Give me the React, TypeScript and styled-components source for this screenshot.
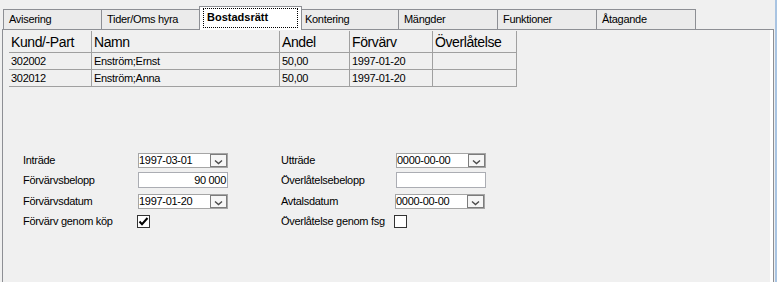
import React from "react";
import styled, { createGlobalStyle, css } from "styled-components";

const Global = createGlobalStyle`
  html, body { margin: 0; padding: 0; background: #f0f0f0; }
  body {
    font-family: "Liberation Sans", Arial, sans-serif;
    font-size: 11px;
    color: #000;
  }
`;

const Window = styled.div`
  box-sizing: border-box;
  width: 777px;
  height: 282px;
  overflow: hidden;
  background: #f0f0f0;
  padding-top: 5px;
  border-right: 2px solid #a9c4e2;
  display: flex;
  flex-direction: column;
`;

const TabStrip = styled.div`
  display: flex;
  align-items: flex-end;
  height: 24px;
  padding-left: 3px;
`;

const Tab = styled.div<{ $active?: boolean }>`
  box-sizing: border-box;
  position: relative;
  display: flex;
  align-items: center;
  border: 1px solid #8d8f94;
  border-bottom: none;
  white-space: nowrap;
  ${(p) =>
    p.$active
      ? css`
          width: 103px;
          height: 24px;
          top: 1px;
          z-index: 1;
          margin: 0 -2px 0 -2px;
          background: #fff;
          padding: 1px 3px 2px 3px;
        `
      : css`
          width: 100px;
          height: 20px;
          margin-left: -1px;
          background: #ebebeb;
          padding: 0 0 1px 5px;
          letter-spacing: -0.3px;
          &:first-child {
            margin-left: 0;
            width: 99px;
          }
        `}
`;

const FocusRing = styled.span`
  box-sizing: border-box;
  flex: 1;
  height: 100%;
  border: 1px dotted #000;
  display: flex;
  align-items: center;
  padding: 0 0 2px 3px;
  font-weight: bold;
`;

const Panel = styled.div`
  box-sizing: border-box;
  margin-left: 2px;
  width: 772px;
  flex: 1;
  border: 1px solid #8d8f94;
  border-bottom: none;
  box-shadow: inset -3px 0 0 #fff;
  padding: 1px 0 0 6px;
`;

const Grid = styled.div`
  display: grid;
  grid-template-columns: 83px 188px 70px 83px 84px;
  width: 508px;
`;

const HeadCell = styled.div`
  box-sizing: border-box;
  height: 22px;
  border-right: 1px solid #a0a0a0;
  border-bottom: 1px solid #a0a0a0;
  font-size: 14px;
  letter-spacing: -0.4px;
  line-height: 16px;
  padding: 3px 0 0 2px;
  white-space: nowrap;
`;

const Cell = styled.div`
  box-sizing: border-box;
  height: 17px;
  border-right: 1px solid #a0a0a0;
  border-bottom: 1px solid #a0a0a0;
  line-height: 13px;
  letter-spacing: -0.3px;
  padding: 2px 0 0 2px;
  white-space: nowrap;
`;

const Form = styled.div`
  display: flex;
  flex-direction: column;
  padding-left: 14px;
  margin-top: 66px;
`;

const FormRow = styled.div<{ $h: number; $gap: number }>`
  display: grid;
  grid-template-columns: 115px 90px 53px 115px 90px;
  align-items: center;
  height: ${(p) => p.$h}px;
  margin-top: ${(p) => p.$gap}px;
`;

const Label = styled.span`
  line-height: 13px;
  letter-spacing: -0.3px;
  white-space: nowrap;
`;

const Spacer = styled.span``;

const Combo = styled.div<{ $shift?: number }>`
  box-sizing: border-box;
  width: 90px;
  height: 15px;
  border: 1px solid #a5a5a5;
  background: #fff;
  display: flex;
  align-items: center;
  justify-content: space-between;
  margin-left: ${(p) => p.$shift ?? 0}px;
`;

const ComboText = styled.span`
  line-height: 13px;
  letter-spacing: -0.3px;
  padding-left: 0;
`;

const DropBtn = styled.span`
  box-sizing: border-box;
  width: 17px;
  height: 13px;
  border: 1px solid #7c7c7c;
  background: #f6f6f6;
  display: flex;
  align-items: flex-end;
  justify-content: center;
`;

const TextBox = styled.div`
  box-sizing: border-box;
  width: 90px;
  height: 16px;
  border: 1px solid #abadb3;
  background: #fff;
  text-align: right;
  line-height: 14px;
  letter-spacing: -0.3px;
  padding-right: 1px;
`;

const CheckBox = styled.span<{ $shift?: number }>`
  box-sizing: border-box;
  width: 13px;
  height: 13px;
  border: 1px solid #333;
  background: #fff;
  display: flex;
  align-items: center;
  justify-content: center;
  margin-left: ${(p) => p.$shift ?? 0}px;
`;

const Chevron = () => (
  <svg width="15" height="11" viewBox="0 0 15 11">
    <path d="M4 5.5 L7.5 8.5 L11 5.5" fill="none" stroke="#4a4a4a" strokeWidth="1.4" />
  </svg>
);

const Check = () => (
  <svg width="11" height="11" viewBox="0 0 11 11">
    <path d="M1.5 5.5 L4 8.2 L9.5 2" fill="none" stroke="#000" strokeWidth="2" />
  </svg>
);

const DateCombo: React.FC<{ value: string; shift?: number }> = ({ value, shift }) => (
  <Combo $shift={shift}>
    <ComboText>{value}</ComboText>
    <DropBtn>
      <Chevron />
    </DropBtn>
  </Combo>
);

const tabs = [
  "Avisering",
  "Tider/Oms hyra",
  "Bostadsrätt",
  "Kontering",
  "Mängder",
  "Funktioner",
  "Åtagande",
];

const headers = ["Kund/-Part", "Namn", "Andel", "Förvärv", "Överlåtelse"];
const rows = [
  ["302002", "Enström;Ernst", "50,00", "1997-01-20", ""],
  ["302012", "Enström;Anna", "50,00", "1997-01-20", ""],
];

export default function App() {
  return (
    <>
      <Global />
      <Window>
        <TabStrip>
          {tabs.map((t) =>
            t === "Bostadsrätt" ? (
              <Tab key={t} $active>
                <FocusRing>{t}</FocusRing>
              </Tab>
            ) : (
              <Tab key={t}>{t}</Tab>
            )
          )}
        </TabStrip>
        <Panel>
          <Grid>
            {headers.map((h) => (
              <HeadCell key={h}>{h}</HeadCell>
            ))}
            {rows.map((r, i) =>
              r.map((c, j) => <Cell key={`${i}-${j}`}>{c}</Cell>)
            )}
          </Grid>
          <Form>
            <FormRow $h={15} $gap={0}>
              <Label>Inträde</Label>
              <DateCombo value="1997-03-01" />
              <Spacer />
              <Label>Utträde</Label>
              <DateCombo value="0000-00-00" />
            </FormRow>
            <FormRow $h={16} $gap={4}>
              <Label>Förvärvsbelopp</Label>
              <TextBox>90 000</TextBox>
              <Spacer />
              <Label>Överlåtelsebelopp</Label>
              <TextBox />
            </FormRow>
            <FormRow $h={16} $gap={5}>
              <Label>Förvärvsdatum</Label>
              <DateCombo value="1997-01-20" />
              <Spacer />
              <Label>Avtalsdatum</Label>
              <DateCombo value="0000-00-00" shift={-1} />
            </FormRow>
            <FormRow $h={13} $gap={6}>
              <Label>Förvärv genom köp</Label>
              <CheckBox $shift={-1}>
                <Check />
              </CheckBox>
              <Spacer />
              <Label>Överlåtelse genom fsg</Label>
              <CheckBox $shift={-2} />
            </FormRow>
          </Form>
        </Panel>
      </Window>
    </>
  );
}
